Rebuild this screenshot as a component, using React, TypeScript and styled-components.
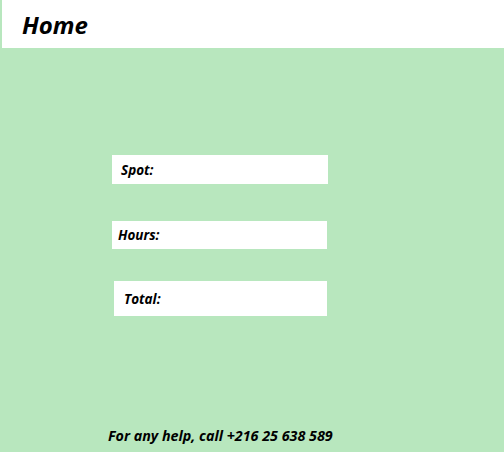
import styled, { createGlobalStyle } from "styled-components";

const GlobalStyle = createGlobalStyle`
  html, body {
    margin: 0;
    padding: 0;
    background-color: #b8e7be;
    font-family: "Open Sans", "Liberation Sans", sans-serif;
  }
`;

const Page = styled.div`
  width: 504px;
  height: 452px;
  display: flex;
  flex-direction: column;
  overflow: hidden;
`;

const Header = styled.header`
  height: 48px;
  margin-left: 2px;
  background-color: #ffffff;
  display: flex;
  align-items: center;
  padding-left: 20px;
`;

const Title = styled.h1`
  margin: 0;
  font-size: 24px;
  font-weight: 700;
  font-style: italic;
  color: #000;
`;

const Content = styled.main`
  flex: 1;
  display: flex;
  flex-direction: column;
  padding-top: 107px;
`;

const Field = styled.div<{ $left: number; $width: number; $height: number; $gap: number; $pad: number }>`
  margin-left: ${(p) => p.$left}px;
  margin-bottom: ${(p) => p.$gap}px;
  width: ${(p) => p.$width}px;
  height: ${(p) => p.$height}px;
  background-color: #ffffff;
  display: flex;
  align-items: center;
  padding-left: ${(p) => p.$pad}px;
  box-sizing: border-box;
`;

const Label = styled.span`
  font-size: 13.5px;
  font-weight: 700;
  font-style: italic;
  color: #000;
`;

const Footer = styled.footer`
  margin-top: auto;
  padding: 0 0 7px 108px;
  font-size: 14.3px;
  font-weight: 700;
  font-style: italic;
  color: #000;
`;

function App() {
  return (
    <Page>
      <GlobalStyle />
      <Header>
        <Title>Home</Title>
      </Header>
      <Content>
        <Field $left={112} $width={216} $height={29} $gap={37} $pad={9}>
          <Label>Spot:</Label>
        </Field>
        <Field $left={112} $width={215} $height={28} $gap={32} $pad={6}>
          <Label>Hours:</Label>
        </Field>
        <Field $left={114} $width={213} $height={35} $gap={0} $pad={10}>
          <Label>Total:</Label>
        </Field>
        <Footer>For any help, call +216 25 638 589</Footer>
      </Content>
    </Page>
  );
}

export default App;
